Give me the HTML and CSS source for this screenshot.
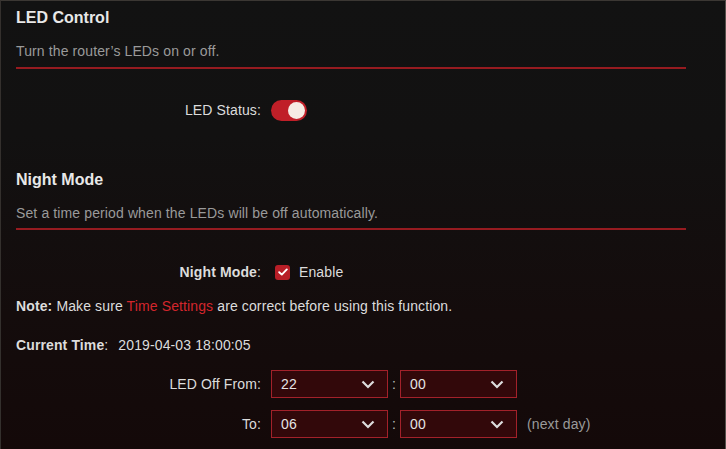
FILE: index.html
```html
<!DOCTYPE html>
<html>
<head>
<meta charset="utf-8">
<link rel="stylesheet" href="styles.css">
</head>
<body>
<div class="panel">
  <section class="block">
    <h2 class="title">LED Control</h2>
    <p class="desc">Turn the router’s LEDs on or off.</p>
    <div class="rule"></div>
  </section>
  <div class="row row-led">
    <div class="label">LED Status:</div>
    <div class="ctrl"><span class="toggle"><span class="knob"></span></span></div>
  </div>

  <section class="block block-night">
    <h2 class="title">Night Mode</h2>
    <p class="desc">Set a time period when the LEDs will be off automatically.</p>
    <div class="rule rule2"></div>
  </section>
  <div class="row row-night">
    <div class="label"><b>Night Mode</b>:</div>
    <div class="ctrl">
      <span class="check"><svg width="10" height="8" viewBox="0 0 10 8"><path d="M1.2 4.2 L3.8 6.6 L8.8 1.4" fill="none" stroke="#fff" stroke-width="1.9" stroke-linecap="round" stroke-linejoin="round"/></svg></span>
      <span class="enable">Enable</span>
    </div>
  </div>
  <p class="note"><b>Note:</b> Make sure <span class="link">Time Settings</span> are correct before using this function.</p>
  <p class="current"><b>Current Time</b>:<span class="val">2019-04-03 18:00:05</span></p>

  <div class="row row-time">
    <div class="label">LED Off From:</div>
    <div class="ctrl">
      <div class="select"><span>22</span><svg class="chev" width="14" height="9" viewBox="0 0 14 9"><path d="M1.5 1.5 L7 7 L12.5 1.5" fill="none" stroke="#ddd" stroke-width="2.2"/></svg></div>
      <span class="colon">:</span>
      <div class="select"><span>00</span><svg class="chev" width="14" height="9" viewBox="0 0 14 9"><path d="M1.5 1.5 L7 7 L12.5 1.5" fill="none" stroke="#ddd" stroke-width="2.2"/></svg></div>
    </div>
  </div>
  <div class="row row-time2">
    <div class="label">To:</div>
    <div class="ctrl">
      <div class="select"><span>06</span><svg class="chev" width="14" height="9" viewBox="0 0 14 9"><path d="M1.5 1.5 L7 7 L12.5 1.5" fill="none" stroke="#ddd" stroke-width="2.2"/></svg></div>
      <span class="colon">:</span>
      <div class="select"><span>00</span><svg class="chev" width="14" height="9" viewBox="0 0 14 9"><path d="M1.5 1.5 L7 7 L12.5 1.5" fill="none" stroke="#ddd" stroke-width="2.2"/></svg></div>
      <span class="nextday">(next day)</span>
    </div>
  </div>
</div>
</body>
</html>
```
FILE: styles.css
```css
html, body {
  margin: 0;
  padding: 0;
  background: #130d0d;
}
.panel {
  box-sizing: border-box;
  width: 726px;
  height: 449px;
  overflow: hidden;
  border-top: 1px solid #3b3733;
  border-left: 1px solid #34302d;
  border-right: 1px solid #55504b;
  background: linear-gradient(to bottom, #121212 0%, #121111 30%, #140c0c 70%, #140909 100%);
  font-family: "Liberation Sans", Arial, sans-serif;
  color: #dcdcdc;
  font-size: 14px;
  letter-spacing: 0.12px;
  padding: 0 0 0 15px;
}
.block {
  width: 670px;
}
.title {
  margin: 7px 0 0 0;
  font-size: 16px;
  line-height: 20px;
  font-weight: bold;
  letter-spacing: 0;
  color: #e8e8e8;
}
.desc {
  margin: 13px 0 0 0;
  line-height: 20px;
  color: #9a9a9a;
}
.rule {
  margin-top: 6px;
  height: 2px;
  background: #961b20;
}
.rule2 {
  margin-top: 5px;
}
.row {
  display: flex;
  align-items: center;
  height: 28px;
}
.label {
  width: 245px;
  text-align: right;
  color: #dcdcdc;
}
.label b {
  font-weight: bold;
}
.ctrl {
  display: flex;
  align-items: center;
  margin-left: 10px;
}
.row-led {
  margin-top: 27px;
}
.toggle {
  position: relative;
  display: block;
  width: 36px;
  height: 21px;
  border-radius: 11px;
  background: #c01f28;
}
.knob {
  position: absolute;
  right: 2px;
  top: 2px;
  width: 17px;
  height: 17px;
  border-radius: 50%;
  background: #f6ece4;
}
.block-night .title {
  margin-top: 46px;
}
.row-night {
  margin-top: 28px;
}
.check {
  display: flex;
  align-items: center;
  justify-content: center;
  width: 15px;
  height: 15px;
  border-radius: 3px;
  background: #b81e27;
  margin-left: 4px;
}
.enable {
  margin-left: 9px;
  color: #dcdcdc;
}
.note {
  margin: 10px 0 0 0;
  line-height: 20px;
  color: #dcdcdc;
}
.note b, .current b {
  font-weight: bold;
}
.link {
  color: #d3262c;
}
.current {
  margin: 19px 0 0 0;
  line-height: 20px;
  color: #dcdcdc;
}
.val {
  margin-left: 10px;
}
.row-time {
  margin-top: 15px;
}
.row-time2 {
  margin-top: 12px;
}
.select {
  box-sizing: border-box;
  width: 117px;
  height: 28px;
  border: 1px solid #a3212a;
  background: #32080a;
  display: flex;
  align-items: center;
  justify-content: space-between;
  padding: 0 12px 0 9px;
  color: #e4e4e4;
}
.colon {
  width: 12px;
  text-align: center;
  color: #bbb;
}
.nextday {
  margin-left: 10px;
  color: #9a9a9a;
}
```
